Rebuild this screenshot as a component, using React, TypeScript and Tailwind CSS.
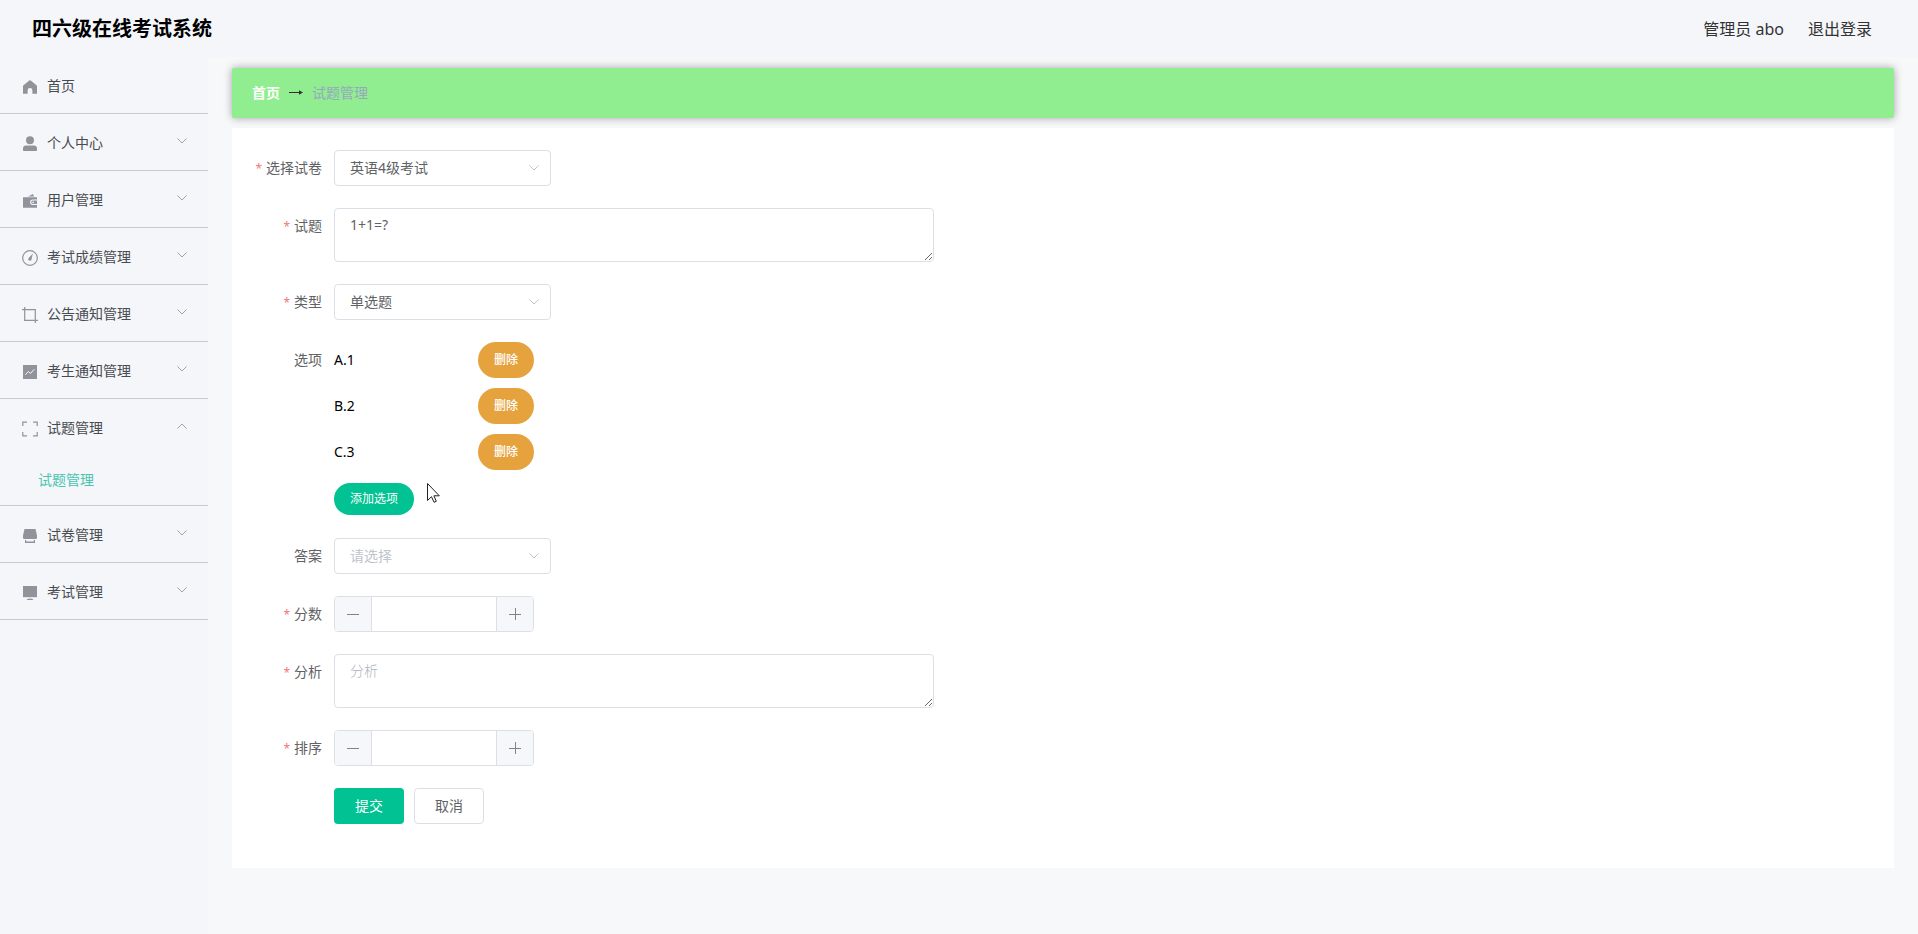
import { useState, type ReactNode } from "react";
import clsx from "clsx";

type IconName = "home" | "user" | "wallet" | "compass" | "crop" | "chart" | "full" | "shop" | "screen";

const menus: { name: string; icon: IconName; children?: string[] }[] = [
  { name: "首页", icon: "home" },
  { name: "个人中心", icon: "user", children: ["修改密码"] },
  { name: "用户管理", icon: "wallet", children: ["用户"] },
  { name: "考试成绩管理", icon: "compass", children: ["考试成绩"] },
  { name: "公告通知管理", icon: "crop", children: ["公告通知"] },
  { name: "考生通知管理", icon: "chart", children: ["考生通知"] },
  { name: "试题管理", icon: "full", children: ["试题管理"] },
  { name: "试卷管理", icon: "shop", children: ["试卷管理"] },
  { name: "考试管理", icon: "screen", children: ["考试管理"] },
];

const icons: Record<IconName, ReactNode> = {
  home: (
    <path
      d="M7.300 1.600a1 1 0 0 1 1.400 0L14.500 6.200a1.500 1.500 0 0 1 .5 1.200v7.400h-4.600v-3.400a2.400 2.400 0 0 0-4.800 0v3.400H1V7.400a1.500 1.500 0 0 1 .5-1.200z"
      fill="currentColor"
    />
  ),
  user: (
    <g fill="currentColor">
      <circle cx="8" cy="4.300" r="4" />
      <path d="M1 14.300v-1.700A3.200 3.200 0 0 1 4.200 9.400h7.600a3.200 3.200 0 0 1 3.200 3.200v1.700a.7.700 0 0 1-.7.700H1.700a.7.700 0 0 1-.7-.7z" />
    </g>
  ),
  wallet: (
    <g fill="currentColor">
      <path d="M6 3.400 10.800 1l1.500 2.400z" />
      <path fillRule="evenodd" d="M1 4.200h14v2.400h-4.200a2.700 2.700 0 0 0 0 5.400H15v2.800H1z" />
      <path fillRule="evenodd" d="M11 7.500h4v3.600h-4a1.800 1.800 0 0 1 0-3.600zm.2 1.100a.8.800 0 1 0 0 1.600.8.800 0 0 0 0-1.600z" />
    </g>
  ),
  compass: (
    <>
      <circle cx="8" cy="8" r="7.300" fill="none" stroke="currentColor" strokeWidth="1.200" />
      <path d="m10.800 3.600-1.300 5.800a1.600 1.600 0 1 1-2.800-1.400z" fill="currentColor" />
    </>
  ),
  crop: <path d="M0 2.700h13.300V16M2.700 0v13.300H16" fill="none" stroke="currentColor" strokeWidth="1.200" />,
  chart: (
    <>
      <path d="M1 1h14v14H1z" fill="currentColor" />
      <path d="m3.300 10.800 3-3.300 2.200 2 3.800-4.300" fill="none" stroke="#f4f6fa" />
    </>
  ),
  full: (
    <path
      d="M.8 5V1.200H5M11 1.200h4.200V5M15.200 11v3.800H11M5 14.800H.8V11"
      fill="none"
      stroke="currentColor"
      strokeWidth="1.200"
    />
  ),
  shop: (
    <g fill="currentColor">
      <path d="M2.500 1h11L15 7.500V9.800a1.200 1.200 0 0 1-1.200 1.200H2.200A1.200 1.200 0 0 1 1 9.800V7.500z" />
      <path d="M3 12h1.200v1.500h7.600V12H13v3H3z" />
    </g>
  ),
  screen: (
    <g fill="currentColor">
      <path d="M1 1h14v11.200H1z" />
      <path d="M5.500 14a8 8 0 0 1 5 0l1 1h-7z" />
    </g>
  ),
};

function Chevron({ up = false, className }: { up?: boolean; className?: string }) {
  return (
    <svg viewBox="0 0 10 6" className={clsx("pointer-events-none h-[6px] w-[10px]", up && "rotate-180", className)}>
      <path d="m.5.500 4.500 4.500L9.500.500" fill="none" stroke="currentColor" />
    </svg>
  );
}

function Sidebar() {
  const [open, setOpen] = useState("试题管理");

  return (
    <nav className="w-52 shrink-0 bg-[#f4f6fa]">
      <ul>
        {menus.map((m) => (
          <li key={m.name} className="border-b border-[#c8cad0]">
            <button
              type="button"
              onClick={() => setOpen(open === m.name ? "" : m.name)}
              className="flex h-14 w-full items-center pt-0.5 pr-[21px] pl-[22px] text-[#484b50]"
            >
              <svg viewBox="0 0 16 16" className="mt-0.5 mr-[9px] size-4 text-[#909399]">
                {icons[m.icon]}
              </svg>
              {m.name}
              {m.children && <Chevron up={open === m.name} className="mb-1 ml-auto text-[#a0a3a9]" />}
            </button>
            {open === m.name &&
              m.children?.map((c) => (
                <a key={c} href="#" className="flex h-[50px] items-center pl-[38px] text-[#4ac4b0]">
                  {c}
                </a>
              ))}
          </li>
        ))}
      </ul>
    </nav>
  );
}

function Field({ label, id, required, children }: { label?: string; id?: string; required?: boolean; children: ReactNode }) {
  return (
    <div className="mb-[22px] flex">
      <div className="w-20 shrink-0 pr-3 text-right leading-9 whitespace-nowrap">
        {label && (
          <label htmlFor={id}>
            {required && <span className="mr-1 text-xs text-[#f07878]">*</span>}
            {label}
          </label>
        )}
      </div>
      <div className="min-w-0 flex-1">{children}</div>
    </div>
  );
}

function Select({ id, options, placeholder }: { id: string; options: string[]; placeholder?: string }) {
  const [value, setValue] = useState(placeholder ? "" : options[0]);

  return (
    <div className="relative w-[217px]">
      <select
        id={id}
        value={value}
        onChange={(e) => setValue(e.target.value)}
        className={clsx(
          "h-9 w-full appearance-none rounded border border-[#dcdfe6] bg-white px-[15px]",
          value ? "text-[#606266]" : "text-[#c0c4cc]"
        )}
      >
        {placeholder && <option value="">{placeholder}</option>}
        {options.map((o) => (
          <option key={o}>{o}</option>
        ))}
      </select>
      <Chevron className="absolute top-[15px] right-3 text-[#c0c4cc]" />
    </div>
  );
}

function NumberInput({ id }: { id: string }) {
  const [value, setValue] = useState("");
  const step = (n: number) => setValue(String(Number(value) + n));

  return (
    <div className="flex h-9 w-[200px] overflow-hidden rounded border border-[#dcdfe6]">
      <button
        type="button"
        aria-label="减少"
        onClick={() => step(-1)}
        className="flex w-[37px] shrink-0 items-center justify-center border-r border-[#dcdfe6] bg-[#f5f7fa]"
      >
        <svg viewBox="0 0 12 12" className="size-3">
          <path d="M0 6.500h12" stroke="#808388" />
        </svg>
      </button>
      <input
        id={id}
        value={value}
        onChange={(e) => setValue(e.target.value)}
        className="w-full min-w-0 text-center outline-none"
      />
      <button
        type="button"
        aria-label="增加"
        onClick={() => step(1)}
        className="flex w-[37px] shrink-0 items-center justify-center border-l border-[#dcdfe6] bg-[#f5f7fa]"
      >
        <svg viewBox="0 0 12 12" className="size-3">
          <path d="M0 6.500h12M6.500 0v12" stroke="#808388" />
        </svg>
      </button>
    </div>
  );
}

const textareaClass =
  "block h-[54px] w-full max-w-[600px] resize rounded border border-[#dcdfe6] px-[15px] py-[5px] leading-[21px] placeholder:font-light placeholder:text-[#b0b4bc]";

function QuestionForm() {
  const [options, setOptions] = useState(["A.1", "B.2", "C.3"]);

  return (
    <form onSubmit={(e) => e.preventDefault()} className="bg-white p-[22px] text-[#606266]">
      <Field label="选择试卷" id="paper" required>
        <Select id="paper" options={["英语4级考试", "英语6级考试"]} />
      </Field>
      <Field label="试题" id="question" required>
        <textarea id="question" defaultValue="1+1=?" className={textareaClass} />
      </Field>
      <Field label="类型" id="type" required>
        <Select id="type" options={["单选题", "多选题", "判断题", "填空题"]} />
      </Field>
      <Field label="选项">
        {options.map((o) => (
          <div key={o} className="mb-2.5 flex h-9 w-[200px] items-center justify-between text-black">
            <span>{o}</span>
            <button
              type="button"
              onClick={() => setOptions(options.filter((v) => v !== o))}
              className="h-9 w-14 rounded-full bg-[#e6a23c] text-xs font-medium text-white"
            >
              删除
            </button>
          </div>
        ))}
        <div className="flex h-9 items-start pt-[3px]">
          <button type="button" className="h-8 w-20 rounded-full bg-[#00c292] text-xs text-white">
            添加选项
          </button>
          <Cursor />
        </div>
      </Field>
      <Field label="答案" id="answer">
        <Select id="answer" options={options} placeholder="请选择" />
      </Field>
      <Field label="分数" id="score" required>
        <NumberInput id="score" />
      </Field>
      <Field label="分析" id="analysis" required>
        <textarea id="analysis" placeholder="分析" className={textareaClass} />
      </Field>
      <Field label="排序" id="sequence" required>
        <NumberInput id="sequence" />
      </Field>
      <Field>
        <div className="flex gap-2.5">
          <button type="submit" className="h-9 w-[70px] rounded bg-[#00c292] text-white">
            提交
          </button>
          <button type="button" className="h-9 w-[70px] rounded border border-[#dcdfe6] bg-white">
            取消
          </button>
        </div>
      </Field>
    </form>
  );
}

function Cursor() {
  return (
    <svg viewBox="0 0 13 20" className="ml-[13px] h-5 w-[13px]">
      <path
        d="M.5.500v17l4-3.800 2.500 5.600 2.300-1-2.400-5.500h5.400z"
        fill="#fff"
        stroke="#222"
        strokeLinejoin="round"
      />
    </svg>
  );
}

export default function App() {
  return (
    <div className="flex min-h-screen flex-col bg-[#f7f8fa] font-['Noto_Sans','Noto_Sans_CJK_SC',sans-serif] text-sm">
      <header className="flex h-[57px] items-center justify-between bg-[#f4f6fa] pr-[46px] pl-8">
        <h1 className="text-xl font-bold text-black">四六级在线考试系统</h1>
        <div className="flex gap-6 text-base text-[#333]">
          <span>管理员 abo</span>
          <a href="#">退出登录</a>
        </div>
      </header>
      <div className="flex flex-1">
        <Sidebar />
        <main className="min-w-0 flex-1 px-6 pt-[11px]">
          <div className="mb-2.5 flex h-[50px] items-center rounded-xs bg-[#90ee90] px-5 shadow-[0_0_8px_rgba(0,0,0,0.35)]">
            <a href="#" className="font-bold text-white">
              首页
            </a>
            <svg viewBox="0 0 14 8" className="mx-[9px] h-2 w-[14px]">
              <path d="M0 3.500h13" stroke="#303133" />
              <path d="M10 1.200 14 3.500 10 5.800z" fill="#303133" />
            </svg>
            <span className="text-[#97a8be]">试题管理</span>
          </div>
          <QuestionForm />
        </main>
      </div>
    </div>
  );
}
